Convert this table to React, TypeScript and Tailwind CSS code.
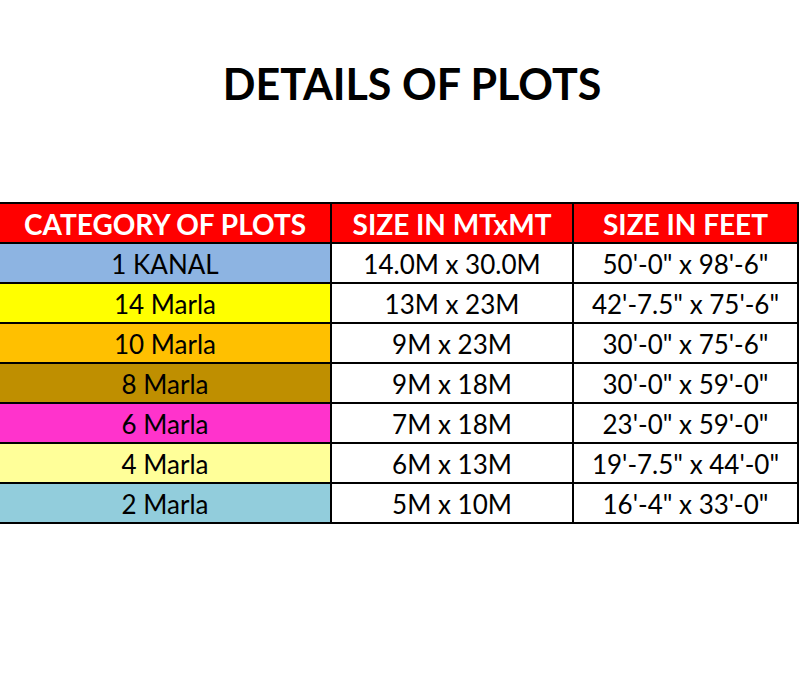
import React from "react";

const rows = [
  { cat: "1 KANAL", bg: "bg-[#8db4e2]", mt: "14.0M x 30.0M", ft: "50'-0\" x 98'-6\"" },
  { cat: "14 Marla", bg: "bg-[#ffff00]", mt: "13M x 23M", ft: "42'-7.5\" x 75'-6\"" },
  { cat: "10 Marla", bg: "bg-[#ffc000]", mt: "9M x 23M", ft: "30'-0\" x 75'-6\"" },
  { cat: "8 Marla", bg: "bg-[#bf8f00]", mt: "9M x 18M", ft: "30'-0\" x 59'-0\"" },
  { cat: "6 Marla", bg: "bg-[#ff33cc]", mt: "7M x 18M", ft: "23'-0\" x 59'-0\"" },
  { cat: "4 Marla", bg: "bg-[#ffff99]", mt: "6M x 13M", ft: "19'-7.5\" x 44'-0\"" },
  { cat: "2 Marla", bg: "bg-[#92cddc]", mt: "5M x 10M", ft: "16'-4\" x 33'-0\"" },
];

export default function App() {
  return (
    <div className="w-[800px] h-[700px] bg-white" style={{ fontFamily: "Lato, 'Open Sans', sans-serif" }}>
      <div className="pt-[56px] pl-[24px] text-center text-[43px] font-bold leading-[56px] text-black">
        DETAILS OF PLOTS
      </div>
      <div className="mt-[90px] w-[799px] bg-black pt-[2px] pb-[2px] pr-[2px] grid grid-cols-[330px_240px_223px] gap-[2px] text-[26px] leading-[40px] text-center text-black">
        <div className="h-[38px] bg-[#ff0000] text-white font-bold text-[28px] leading-[40px]">CATEGORY OF PLOTS</div>
        <div className="h-[38px] bg-[#ff0000] text-white font-bold text-[28px] leading-[40px]">SIZE IN MTxMT</div>
        <div className="h-[38px] bg-[#ff0000] text-white font-bold text-[28px] leading-[40px]">SIZE IN FEET</div>
        {rows.map((r) => (
          <React.Fragment key={r.cat}>
            <div className={`h-[38px] overflow-hidden ${r.bg}`}>{r.cat}</div>
            <div className="h-[38px] overflow-hidden bg-white">{r.mt}</div>
            <div className="h-[38px] overflow-hidden bg-white">{r.ft}</div>
          </React.Fragment>
        ))}
      </div>
    </div>
  );
}
